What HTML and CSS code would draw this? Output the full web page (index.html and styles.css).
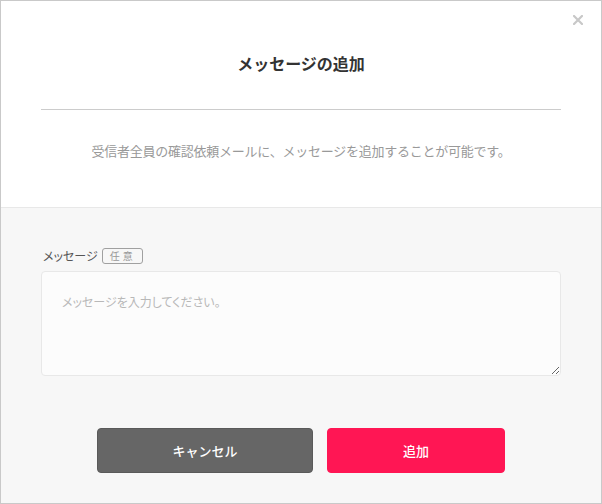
FILE: index.html
```html
<!DOCTYPE html>
<html lang="ja">
<head>
<meta charset="utf-8">
<link rel="stylesheet" href="styles.css">
</head>
<body>
<div class="modal">
  <button class="close" aria-label="閉じる">
    <svg width="10" height="10" viewBox="0 0 10 10"><path d="M1 1L9 9M9 1L1 9" stroke="#c8c8c8" stroke-width="2.2" stroke-linecap="square"/></svg>
  </button>
  <div class="head">
    <h1 class="title">メッセージの追加</h1>
    <div class="rule"></div>
    <p class="desc">受信者全員の確認依頼メールに、メッセージを追加することが可能です。</p>
  </div>
  <div class="body">
    <div class="label-row">
      <span class="label">メッセージ</span>
      <span class="badge">任意</span>
    </div>
    <textarea class="message" placeholder="メッセージを入力してください。"></textarea>
    <div class="actions">
      <button class="btn btn-cancel">キャンセル</button>
      <button class="btn btn-add">追加</button>
    </div>
  </div>
</div>
</body>
</html>
```

FILE: styles.css
```css
* { box-sizing: border-box; }
html, body { margin: 0; padding: 0; }
body {
  font-family: "Noto Sans CJK JP", "Noto Sans", sans-serif;
  background: #fff;
}
.modal {
  position: relative;
  width: 602px;
  height: 504px;
  border: 1px solid #c9c9c9;
  display: flex;
  flex-direction: column;
  background: #f7f7f7;
}
.close {
  position: absolute;
  top: 14px;
  right: 18px;
  width: 10px;
  height: 10px;
  padding: 0;
  border: 0;
  background: none;
  display: flex;
}
.head {
  background: #fff;
  padding: 50px 40px 46px;
  border-bottom: 1px solid #e8e8e8;
  display: flex;
  flex-direction: column;
  align-items: center;
}
.title {
  margin: 0;
  font-size: 16px;
  line-height: 24px;
  font-weight: 700;
  color: #333;
}
.rule {
  align-self: stretch;
  height: 1px;
  background: #cccccc;
  margin-top: 34px;
}
.desc {
  margin: 31px 0 0;
  font-size: 13px;
  line-height: 20px;
  color: #999;
  letter-spacing: -0.25px;
}
.body {
  flex: 1;
  padding: 40px 40px 0;
  display: flex;
  flex-direction: column;
}
.label-row {
  display: flex;
  align-items: center;
  gap: 4px;
  height: 16px;
  padding-left: 2px;
}
.label {
  font-size: 12px;
  color: #555;
  line-height: 16px;
  font-feature-settings: "palt";
}
.badge {
  font-size: 10px;
  line-height: 14px;
  color: #999;
  border: 1px solid #a0a0a0;
  border-radius: 3px;
  padding: 0 6px 0 7px;
  letter-spacing: 3px;
  height: 16px;
  display: flex;
  align-items: center;
}
.message {
  margin-top: 7px;
  width: 520px;
  height: 105px;
  background: #fcfcfc;
  border: 1px solid #e8e8e8;
  border-radius: 4px;
  padding: 20px;
  font-family: inherit;
  font-size: 12px;
  line-height: 20px;
  color: #333;
  outline: none;
  resize: vertical;
  font-feature-settings: "palt";
}
.message::placeholder {
  color: #b8b8b8;
}
.actions {
  margin-top: 52px;
  display: flex;
  justify-content: center;
  gap: 14px;
}
.btn {
  height: 45px;
  border-radius: 4px;
  font-family: inherit;
  font-size: 13px;
  font-weight: 500;
  color: #fff;
  cursor: pointer;
}
.btn-cancel {
  width: 216px;
  background: #666;
  border: 1px solid #5a5a5a;
}
.btn-add {
  width: 178px;
  background: #ff1654;
  border: 1px solid #ff1654;
}
```
